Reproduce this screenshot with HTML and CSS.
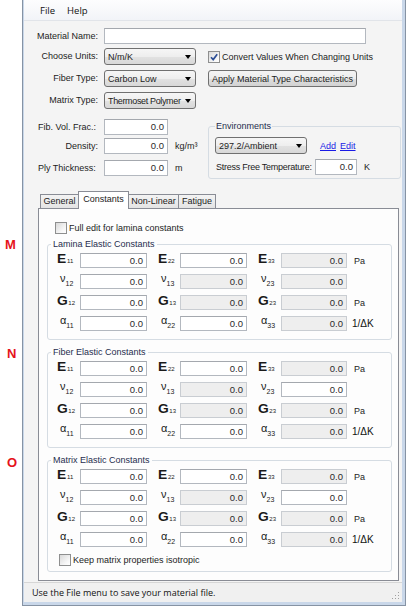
FILE: index.html
```html
<!DOCTYPE html>
<html>
<head>
<meta charset="utf-8">
<title>Material</title>
<link rel="stylesheet" href="styles.css">
</head>
<body>
<div class="note note-m">M</div>
<div class="note note-n">N</div>
<div class="note note-o">O</div>
<div class="window">
  <div class="client">
    <div class="menubar"><span class="menu-item">File</span><span class="menu-item">Help</span></div>

    <div class="form">
      <div class="lbl r">Material Name:</div>
      <div class="txt wide"></div>

      <div class="lbl r c">Choose Units:</div>
      <div class="combo"><span>N/m/K</span><i class="arrow"></i></div>
      <div class="check-row"><span class="cb"><svg viewBox="0 0 10 10" width="10" height="10"><path d="M2 5.2 L4.2 7.6 L8.2 2.2" fill="none" stroke="#2d4f96" stroke-width="1.7"/></svg></span><span>Convert Values When Changing Units</span></div>

      <div class="lbl r c">Fiber Type:</div>
      <div class="combo"><span>Carbon Low</span><i class="arrow"></i></div>
      <div class="btn">Apply Material Type Characteristics</div>

      <div class="lbl r c">Matrix Type:</div>
      <div class="combo"><span class="tight">Thermoset Polymer</span><i class="arrow"></i></div>

      <fieldset class="env">
        <legend>Environments</legend>
        <div class="env-row1">
          <div class="combo"><span>297.2/Ambient</span><i class="arrow"></i></div>
          <span class="link">Add</span><span class="link">Edit</span>
        </div>
        <div class="env-row2">
          <span class="sft">Stress Free Temperature:</span>
          <div class="txt sft-in">0.0</div>
          <span class="unit-k">K</span>
        </div>
      </fieldset>

      <div class="lbl l">Fib. Vol. Frac.:</div>
      <div class="num-row"><div class="txt num">0.0</div></div>

      <div class="lbl r">Density:</div>
      <div class="num-row"><div class="txt num">0.0</div><span>kg/m³</span></div>

      <div class="lbl l">Ply Thickness:</div>
      <div class="num-row"><div class="txt num">0.0</div><span>m</span></div>
    </div>

    <div class="tabs">
      <div class="tab t-general">General</div>
      <div class="tab t-const sel">Constants</div>
      <div class="tab t-nonlin">Non-Linear</div>
      <div class="tab t-fat">Fatigue</div>
    </div>

    <div class="panel">
      <div class="cb-row"><span class="cb"></span><span>Full edit for lamina constants</span></div>

      <fieldset class="group">
        <legend>Lamina Elastic Constants</legend>
        <div class="cgrid">
          <span class="sym"><b>E</b><sub class="s1">11</sub></span><div class="txt">0.0</div>
          <span class="sym pl"><b>E</b><sub class="s1">22</sub></span><div class="txt">0.0</div>
          <span class="sym pl"><b>E</b><sub class="s1">33</sub></span><div class="txt ro">0.0</div>
          <span class="unit">Pa</span>

          <span class="sym"><b class="lc">ν</b><sub class="s2">12</sub></span><div class="txt">0.0</div>
          <span class="sym pl"><b class="lc">ν</b><sub class="s2">13</sub></span><div class="txt ro">0.0</div>
          <span class="sym pl"><b class="lc">ν</b><sub class="s2">23</sub></span><div class="txt ro">0.0</div>
          <span class="unit"></span>

          <span class="sym"><b>G</b><sub class="s1">12</sub></span><div class="txt">0.0</div>
          <span class="sym pl"><b>G</b><sub class="s1">13</sub></span><div class="txt ro">0.0</div>
          <span class="sym pl"><b>G</b><sub class="s1">23</sub></span><div class="txt ro">0.0</div>
          <span class="unit">Pa</span>

          <span class="sym"><b class="lc">α</b><sub class="s2">11</sub></span><div class="txt">0.0</div>
          <span class="sym pl"><b class="lc">α</b><sub class="s2">22</sub></span><div class="txt">0.0</div>
          <span class="sym pl"><b class="lc">α</b><sub class="s2">33</sub></span><div class="txt ro">0.0</div>
          <span class="unit dk">1/ΔK</span>
        </div>
      </fieldset>

      <fieldset class="group">
        <legend>Fiber Elastic Constants</legend>
        <div class="cgrid">
          <span class="sym"><b>E</b><sub class="s1">11</sub></span><div class="txt">0.0</div>
          <span class="sym pl"><b>E</b><sub class="s1">22</sub></span><div class="txt">0.0</div>
          <span class="sym pl"><b>E</b><sub class="s1">33</sub></span><div class="txt ro">0.0</div>
          <span class="unit">Pa</span>

          <span class="sym"><b class="lc">ν</b><sub class="s2">12</sub></span><div class="txt">0.0</div>
          <span class="sym pl"><b class="lc">ν</b><sub class="s2">13</sub></span><div class="txt ro">0.0</div>
          <span class="sym pl"><b class="lc">ν</b><sub class="s2">23</sub></span><div class="txt">0.0</div>
          <span class="unit"></span>

          <span class="sym"><b>G</b><sub class="s1">12</sub></span><div class="txt">0.0</div>
          <span class="sym pl"><b>G</b><sub class="s1">13</sub></span><div class="txt ro">0.0</div>
          <span class="sym pl"><b>G</b><sub class="s1">23</sub></span><div class="txt ro">0.0</div>
          <span class="unit">Pa</span>

          <span class="sym"><b class="lc">α</b><sub class="s2">11</sub></span><div class="txt">0.0</div>
          <span class="sym pl"><b class="lc">α</b><sub class="s2">22</sub></span><div class="txt">0.0</div>
          <span class="sym pl"><b class="lc">α</b><sub class="s2">33</sub></span><div class="txt ro">0.0</div>
          <span class="unit dk">1/ΔK</span>
        </div>
      </fieldset>

      <fieldset class="group">
        <legend>Matrix Elastic Constants</legend>
        <div class="cgrid">
          <span class="sym"><b>E</b><sub class="s1">11</sub></span><div class="txt">0.0</div>
          <span class="sym pl"><b>E</b><sub class="s1">22</sub></span><div class="txt">0.0</div>
          <span class="sym pl"><b>E</b><sub class="s1">33</sub></span><div class="txt ro">0.0</div>
          <span class="unit">Pa</span>

          <span class="sym"><b class="lc">ν</b><sub class="s2">12</sub></span><div class="txt">0.0</div>
          <span class="sym pl"><b class="lc">ν</b><sub class="s2">13</sub></span><div class="txt ro">0.0</div>
          <span class="sym pl"><b class="lc">ν</b><sub class="s2">23</sub></span><div class="txt">0.0</div>
          <span class="unit"></span>

          <span class="sym"><b>G</b><sub class="s1">12</sub></span><div class="txt">0.0</div>
          <span class="sym pl"><b>G</b><sub class="s1">13</sub></span><div class="txt ro">0.0</div>
          <span class="sym pl"><b>G</b><sub class="s1">23</sub></span><div class="txt ro">0.0</div>
          <span class="unit">Pa</span>

          <span class="sym"><b class="lc">α</b><sub class="s2">11</sub></span><div class="txt">0.0</div>
          <span class="sym pl"><b class="lc">α</b><sub class="s2">22</sub></span><div class="txt">0.0</div>
          <span class="sym pl"><b class="lc">α</b><sub class="s2">33</sub></span><div class="txt ro">0.0</div>
          <span class="unit dk">1/ΔK</span>
        </div>
        <div class="cb-row iso"><span class="cb"></span><span>Keep matrix properties isotropic</span></div>
      </fieldset>
    </div>

    <div class="status">
      <span>Use the File menu to save your material file.</span>
      <svg class="grip" viewBox="0 0 8 8" width="8" height="8">
        <rect x="6" y="0" width="1" height="1" fill="#a0a0a0"/>
        <rect x="3" y="3" width="1" height="1" fill="#a0a0a0"/>
        <rect x="6" y="3" width="1" height="1" fill="#a0a0a0"/>
        <rect x="0" y="6" width="1" height="1" fill="#a0a0a0"/>
        <rect x="3" y="6" width="1" height="1" fill="#a0a0a0"/>
        <rect x="6" y="6" width="1" height="1" fill="#a0a0a0"/>
      </svg>
    </div>
  </div>
</div>
</body>
</html>
```
FILE: styles.css
```css
* { box-sizing: border-box; }
html, body { margin: 0; padding: 0; }
body {
  background: #ffffff;
  font-family: "Liberation Sans", Arial, sans-serif;
  font-size: 9px;
  color: #1c1c1c;
  width: 411px;
  height: 610px;
  overflow: hidden;
  position: relative;
}

/* red annotation letters */
.note {
  position: absolute;
  font: bold 13px/13px "Liberation Sans", Arial, sans-serif;
  color: #e5131b;
}
.note-m { top: 238px; left: 5px; }
.note-n { top: 347px; left: 7px; }
.note-o { top: 456px; left: 7px; }

/* window frame */
.window {
  margin-left: 22px;
  width: 384px;
  height: 606px;
  border: 1px solid #8693a4;
  border-top: 0;
  background: #c9d7e9;
  padding: 0 3px 3px 1px;
  display: flex;
  flex-direction: column;
}
.client {
  flex: 1;
  background: #f4f4f4;
  display: flex;
  flex-direction: column;
}

/* menu */
.menubar {
  height: 21px;
  display: flex;
  align-items: center;
  padding-left: 10px;
  background: linear-gradient(#fdfdfe, #f2f4f8);
  border-bottom: 1px solid #e1e4e9;
  font-family: "Open Sans", "Noto Sans", sans-serif;
  font-size: 9.5px;
  color: #111;
}
.menu-item { padding: 0 6px; }

/* top form */
.form {
  display: grid;
  grid-template-columns: 80px 104px 194px;
  grid-template-rows: 20px 22px 22px 27px 19px 22px 18px;
  margin-top: 7px;
  align-items: start;
}
.lbl { grid-column: 1; line-height: 16px; white-space: nowrap; }
.lbl.c { line-height: 17px; }
.lbl.r { text-align: right; padding-right: 6px; }
.lbl.l { padding-left: 14px; }

.txt {
  height: 16px;
  background: #fff;
  border: 1px solid #b3b8bf;
  border-top-color: #a4a8ae;
  padding: 0 3px 0 2px;
  line-height: 14px;
  text-align: right;
  font-size: 9.5px;
  color: #2a2a2a;
  white-space: nowrap;
}
.txt.wide { grid-column: 2 / 4; width: 262px; }
.txt.num { width: 64px; }
.num-row { display: flex; align-items: center; gap: 7px; }

.combo {
  width: 92px;
  height: 17px;
  border: 1px solid #707070;
  border-radius: 3px;
  background: linear-gradient(#f6f6f6 0%, #eeeeee 50%, #e2e2e2 51%, #d8d8d8 100%);
  display: flex;
  align-items: center;
  padding-left: 3px;
  white-space: nowrap;
}
.combo .tight { letter-spacing: -0.35px; }
.arrow {
  margin-left: auto;
  margin-right: 4px;
  flex: none;
  width: 0;
  height: 0;
  border-left: 3.5px solid transparent;
  border-right: 3.5px solid transparent;
  border-top: 4px solid #000;
}

.cb {
  width: 12px;
  height: 12px;
  border: 1px solid #8e8f8f;
  background: linear-gradient(135deg, #d9d9d9, #f7f7f7 70%, #fff);
  display: inline-flex;
  align-items: center;
  justify-content: center;
  flex: none;
}
.check-row { height: 17px; display: flex; align-items: center; gap: 2px; white-space: nowrap; }

.btn {
  width: 149px;
  height: 17px;
  border: 1px solid #707070;
  border-radius: 3px;
  background: linear-gradient(#f4f4f4 0%, #ececec 50%, #dedede 51%, #d2d2d2 100%);
  display: flex;
  align-items: center;
  justify-content: center;
  white-space: nowrap;
}

/* environments */
.env {
  grid-column: 3;
  grid-row: 5 / span 3;
  width: 193px;
  height: 58px;
  margin: 2px 0 0 0;
  padding: 0 0 3px 6px;
  border: 1px solid #d5dce3;
  border-radius: 3px;
  min-width: 0;
}
legend { padding: 0 1px; line-height: 10px; color: #1f2d4d; }
.env-row1 { margin-top: 6px; display: flex; align-items: center; height: 17px; }
.env-row1 .combo { height: 17px; }
.link { color: #1a1ae6; text-decoration: underline; }
.env-row1 .link:first-of-type { margin-left: 13px; }
.env-row1 .link + .link { margin-left: 4px; }
.env-row2 { margin-top: 5px; display: flex; align-items: center; height: 16px; }
.sft { width: 100px; white-space: nowrap; letter-spacing: -0.25px; padding-left: 1px; }
.txt.sft-in { width: 42px; }
.unit-k { margin-left: 7px; }

/* tabs */
.tabs {
  display: flex;
  align-items: flex-end;
  margin-top: 13px;
  padding-left: 16px;
  height: 17px;
  position: relative;
  z-index: 1;
}
.tab {
  height: 14px;
  border: 1px solid #898c95;
  border-bottom: 0;
  background: linear-gradient(#f3f3f3, #e4e4e4);
  line-height: 13px;
  text-align: center;
  white-space: nowrap;
  margin-left: -1px;
}
.t-general { width: 39px; margin-left: 0; }
.t-const { width: 51px; }
.t-nonlin { width: 51px; }
.t-fat { width: 38px; }
.tab.sel {
  height: 18px;
  margin-bottom: -1px;
  background: #ffffff;
  line-height: 13px;
  padding-top: 1px;
  position: relative;
  z-index: 2;
}

.panel {
  margin-left: 14px;
  width: 361px;
  height: 373px;
  border: 1px solid #898c95;
  background: #fdfdfd;
  padding: 12px 0 0 8px;
  display: flex;
  flex-direction: column;
}
.cb-row { display: flex; align-items: center; gap: 2px; height: 13px; margin-left: 8px; white-space: nowrap; }

.group {
  width: 345px;
  margin: 7px 0 0 0;
  padding: 4px 0 8px 9px;
  border: 1px solid #d5dce3;
  border-radius: 3px;
  min-width: 0;
}
.cb-row + .group { margin-top: 5px; }
.group legend { margin-left: -6px; padding: 0 2px; }
.group .cb-row.iso { margin: 7px 0 0 2px; height: 12px; }
.group:last-child { padding-bottom: 5px; }

.cgrid {
  display: grid;
  grid-template-columns: 23px 67px 33px 67px 34px 66px auto;
  grid-auto-rows: 15px;
  row-gap: 6px;
  align-items: center;
}
.cgrid .txt { height: 15px; line-height: 13px; }
.txt.ro { background: #eeeeee; border-color: #c9cdd2; }
.sym { white-space: nowrap; line-height: 15px; color: #1a1a1a; }
.sym.pl { padding-left: 11px; }
.sym b { font-size: 12px; font-weight: bold; display: inline-block; transform: scaleX(1.15); transform-origin: left center; margin-right: 2px; }
.sym b.lc { font-size: 11px; font-weight: normal; transform: none; margin-left: 3px; margin-right: 0; position: relative; top: -2px; }
.s1 { font-size: 6px; vertical-align: baseline; }
.s2 { font-size: 7px; vertical-align: -2px; margin-left: 0; }
.unit { padding-left: 7px; white-space: nowrap; }
.unit.dk { font-size: 10px; padding-left: 5px; color: #111; }

/* status bar */
.status {
  margin-top: 1px;
  height: 20px;
  border-top: 1px solid #d6d6d6;
  background: #f0f0f0;
  padding-left: 8px;
  padding-right: 2px;
  font-family: "Open Sans", "Noto Sans", sans-serif;
  font-size: 9px;
  line-height: 19px;
  color: #111;
  display: flex;
  align-items: center;
}
.grip { margin-left: auto; align-self: flex-end; margin-bottom: 2px; }
```
